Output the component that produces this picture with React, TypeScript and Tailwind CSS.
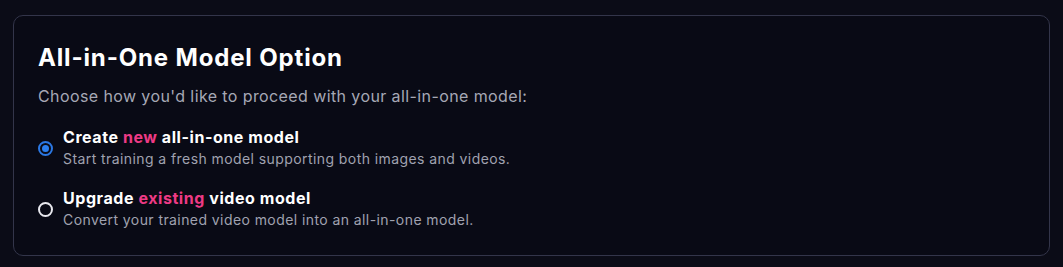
import { useState } from 'react';

const options = [
  {
    id: 'new',
    before: 'Create ',
    accent: 'new',
    after: ' all-in-one model',
    desc: 'Start training a fresh model supporting both images and videos.',
  },
  {
    id: 'upgrade',
    before: 'Upgrade ',
    accent: 'existing',
    after: ' video model',
    desc: 'Convert your trained video model into an all-in-one model.',
  },
];

export default function App() {
  const [choice, setChoice] = useState('new');

  return (
    <div className="min-h-[267px] bg-[#0b0c17] px-[13px] pt-[15px] pb-[12px] font-['Inter',sans-serif]">
      <div className="rounded-[10px] border border-[#33354a] bg-[#090a15] pl-[24px] pr-6 pt-[26px] pb-[24px]">
        <h2 className="text-[24px] font-bold leading-[32px] tracking-[0.035em] text-white">All-in-One Model Option</h2>
        <p className="mt-[10px] text-[16px] leading-6 tracking-[0.025em] text-[#a6a8b5]">
          Choose how you'd like to proceed with your all-in-one model:
        </p>
        <div className="mt-[18px] flex flex-col gap-[17px]">
          {options.map((o) => {
            const active = choice === o.id;
            return (
              <label key={o.id} className="flex cursor-pointer items-center gap-[10px]" onClick={() => setChoice(o.id)}>
                <span
                  className={
                    active
                      ? 'flex h-[15px] w-[15px] shrink-0 items-center justify-center rounded-full border-2 border-[#2b78e4] bg-[#0b0c17]'
                      : 'flex h-[15px] w-[15px] shrink-0 items-center justify-center rounded-full border-2 border-[#e8e8ee]'
                  }
                >
                  {active && <span className="h-[7px] w-[7px] rounded-full bg-[#2b7ff0]" />}
                </span>
                <span className="flex flex-col">
                  <span className="text-[16px] font-bold leading-[22px] tracking-[0.035em] text-white">
                    {o.before}
                    <span className="text-[#ee3a85]">{o.accent}</span>
                    {o.after}
                  </span>
                  <span className="text-[14px] leading-[22px] tracking-[0.03em] text-[#a0a2b0]">{o.desc}</span>
                </span>
              </label>
            );
          })}
        </div>
      </div>
    </div>
  );
}
